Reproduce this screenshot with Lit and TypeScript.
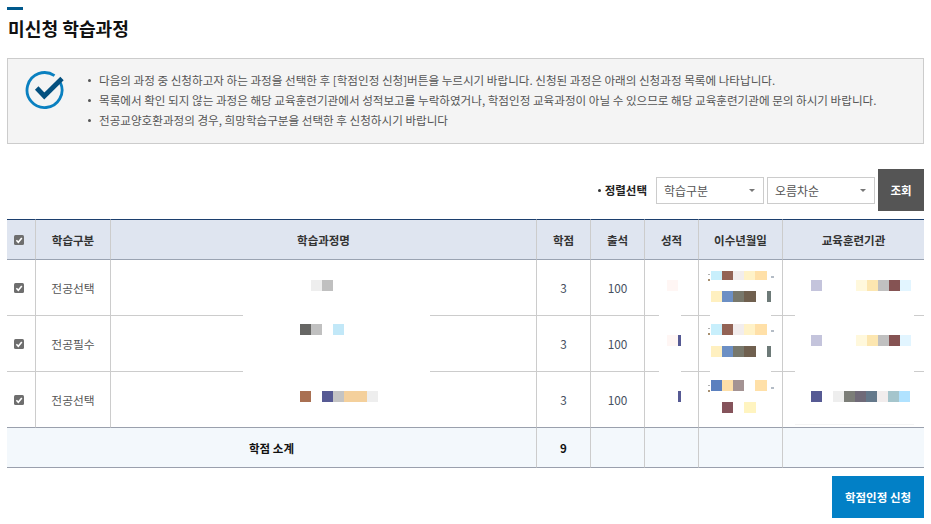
import { LitElement, html, css, svg } from "lit";
import { customElement } from "lit/decorators.js";

type Tile = [number, number, number, number, string];

const OX = 7;
const OY = 219;

const row = (y: number, items: [number, number, string][], h = 11): Tile[] =>
  items.map(([x1, x2, c]) => [x1, y, x2 - x1, h, c] as Tile);

const date1 = (y1: number, h1: number, y2: number): Tile[] => [
  ...row(y1, [[711, 722, "#c8effc"], [722, 733, "#936355"], [733, 744, "#f2eded"], [744, 755, "#fff2c8"], [755, 767, "#ffe0a8"]], h1),
  ...row(y2, [[711, 722, "#fff0c0"], [722, 733, "#6c8fc4"], [733, 744, "#78786c"], [744, 756, "#70604f"], [767, 771, "#6d7a78"]]),
];
const inst1 = (y: number): Tile[] =>
  row(y, [[811, 822, "#c4c4dc"], [856, 867, "#fff8dc"], [867, 878, "#fce6b0"], [878, 889, "#c0c0c0"], [889, 900, "#855353"], [900, 911, "#e2f5ff"]]);

const specks = (y: number): Tile[] => [
  [708, y, 2, 1, "#b0b0b0"],
  [708, y + 5, 2, 2, "#a89070"],
  [771, y + 2, 3, 2, "#b4bcc6"],
];

const WHITE = "#ffffff";
const TILES: Tile[] = [
  // white masks over the row rules
  [243, 315, 187, 1, WHITE], [243, 371, 187, 1, WHITE],
  [659, 315, 22, 1, WHITE], [659, 371, 22, 1, WHITE],
  [710, 315, 61, 1, WHITE], [710, 371, 61, 1, WHITE],
  [795, 315, 119, 1, WHITE], [795, 371, 119, 1, WHITE],
  [795, 424, 119, 1, "#f4f4f4"],
  // course names
  ...row(280, [[311, 322, "#eeeeee"], [322, 333, "#c0c0c0"]]),
  ...row(324, [[300, 311, "#666664"], [311, 322, "#c0c0c0"], [333, 344, "#c2e8f8"]]),
  ...row(391, [[300, 311, "#a97052"], [322, 333, "#565a94"], [333, 344, "#c4c4c4"], [344, 367, "#f4d09c"], [367, 378, "#eeeeee"]]),
  // grades
  ...row(280, [[667, 678, "#fff6f4"]]),
  ...row(335, [[667, 678, "#fff6f4"], [678, 681, "#565a94"]]),
  ...row(391, [[678, 681, "#565a94"]]),
  // dates
  ...date1(271, 9, 291),
  ...date1(324, 11, 346),
  ...row(380, [[711, 722, "#5b80bf"], [722, 733, "#fddfa8"], [733, 744, "#a49393"], [755, 767, "#ffe0a8"]]),
  ...row(402, [[722, 733, "#85535b"], [744, 756, "#fff4c0"]]),
  ...specks(274), ...specks(328), ...specks(385),
  // institutions
  ...inst1(280),
  ...inst1(335),
  ...row(391, [[811, 822, "#565a94"], [833, 844, "#eeeeee"], [844, 855, "#7c7e78"], [855, 866, "#706a78"], [866, 877, "#64788a"], [877, 888, "#f2eded"], [888, 899, "#a5c5cc"], [899, 910, "#b0e2ff"]]),
];

const check = svg`<path d="M2.4 5.2 L4.3 7.2 L7.8 2.9" fill="none" stroke="#fff" stroke-width="1.6"/>`;

@customElement("app-root")
export class AppRoot extends LitElement {
  static styles = css`
    :host {
      display: block;
      width: 931px;
      height: 524px;
      box-sizing: border-box;
      padding: 7px 7px 0;
      overflow: hidden;
      background: #fff;
      font-family: "Noto Sans CJK KR", "Noto Sans", sans-serif;
      font-size: 12px;
      color: #555;
    }
    .accent { width: 16px; height: 3px; background: #00598c; }
    h1 {
      margin: 0;
      padding: 6px 0 0 1px;
      font-size: 18.15px;
      line-height: 24px;
      font-weight: 700;
      color: #111;
      height: 24px;
    }
    .notice {
      box-sizing: border-box;
      margin-top: 18px;
      height: 86px;
      border: 1px solid #ccc;
      background: #f4f4f4;
      display: flex;
      align-items: flex-start;
      padding: 11px 0 0 17px;
    }
    .notice svg { width: 40px; height: 40px; flex: none; }
    .notice ul { list-style: none; margin: 0; padding: 0 0 0 23px; }
    .notice li {
      height: 20px;
      line-height: 20px;
      padding-left: 11px;
      position: relative;
      white-space: nowrap;
      color: #555;
      font-size: 11.58px;
    }
    .notice li::before {
      content: "";
      position: absolute;
      left: 0;
      top: 9px;
      width: 3px;
      height: 3px;
      border-radius: 50%;
      background: #555;
    }
    .filters {
      display: flex;
      justify-content: flex-end;
      align-items: center;
      margin-top: 25px;
      height: 42px;
    }
    .sort-label {
      color: #222;
      font-weight: 700;
      font-size: 11.5px;
      margin-right: 9px;
      display: flex;
      align-items: center;
      gap: 4px;
    }
    .sort-label::before {
      content: "";
      width: 3px;
      height: 3px;
      border-radius: 50%;
      background: #333;
    }
    .select {
      box-sizing: border-box;
      width: 108px;
      height: 27px;
      border: 1px solid #ccc;
      margin-right: 3px;
      display: flex;
      align-items: center;
      justify-content: space-between;
      padding: 0 8px 0 7px;
      color: #555;
      background: #fff;
    }
    .select i {
      width: 0;
      height: 0;
      border-left: 3px solid transparent;
      border-right: 3px solid transparent;
      border-top: 3px solid #777;
    }
    .search {
      width: 46px;
      height: 42px;
      background: #555;
      color: #fff;
      font-weight: 700;
      font-size: 11.5px;
      display: flex;
      align-items: center;
      justify-content: center;
    }
    .table-wrap { position: relative; margin-top: 8px; }
    table {
      border-collapse: separate;
      border-spacing: 0;
      table-layout: fixed;
      width: 917px;
    }
    th, td {
      box-sizing: border-box;
      padding: 0;
      text-align: center;
      border-right: 1px solid #ccc;
      border-bottom: 1px solid #ccc;
    }
    th:last-child, td:last-child { border-right: 0; }
    th {
      height: 41px;
      background: #dfe5f0;
      border-top: 1px solid #1c3f6e;
      border-bottom: 1px solid #9aa3b2;
      color: #333;
      font-weight: 700;
      font-size: 11.5px;
    }
    td { height: 56px; color: #555; font-size: 11.8px; }
    td.num { color: #465060; padding-bottom: 1px; }
    tbody tr:last-child td { border-bottom-color: #9aa0ad; }
    tfoot td {
      height: 40px;
      background: #f3f8fc;
      border-bottom: 1px solid #9aa0ad;
      color: #111;
      font-weight: 700;
      font-size: 11.5px;
    }
    .cb { display: block; width: 10px; height: 10px; margin: 0 auto 0 7px; }
    .tiles { position: absolute; left: 0; top: 0; width: 0; height: 0; }
    .tiles span { position: absolute; display: block; }
    .actions { display: flex; justify-content: flex-end; margin-top: 8px; }
    .apply {
      width: 92px;
      height: 42px;
      background: #0280c6;
      color: #fff;
      font-weight: 700;
      font-size: 11.5px;
      display: flex;
      align-items: center;
      justify-content: center;
    }
  `;

  private cb() {
    return html`<svg class="cb" viewBox="0 0 10 10"><rect width="10" height="10" rx="1.5" fill="#6e6e6e"/>${check}</svg>`;
  }

  render() {
    const rows = ["전공선택", "전공필수", "전공선택"];
    return html`
      <div class="accent"></div>
      <h1>미신청 학습과정</h1>
      <div class="notice">
        <svg viewBox="0 0 40 40">
          <path d="M29.5 5.7 A17.5 17.5 0 1 0 35.36 12.6" fill="none" stroke="#0a80c0" stroke-width="2.8"/>
          <path d="M11.7 18 L19.3 26 L37 8.5" fill="none" stroke="#04507f" stroke-width="4.8"/>
        </svg>
        <ul>
          <li>다음의 과정 중 신청하고자 하는 과정을 선택한 후 [학점인정 신청]버튼을 누르시기 바랍니다. 신청된 과정은 아래의 신청과정 목록에 나타납니다.</li>
          <li>목록에서 확인 되지 않는 과정은 해당 교육훈련기관에서 성적보고를 누락하였거나, 학점인정 교육과정이 아닐 수 있으므로 해당 교육훈련기관에 문의 하시기 바랍니다.</li>
          <li>전공교양호환과정의 경우, 희망학습구분을 선택한 후 신청하시기 바랍니다</li>
        </ul>
      </div>
      <div class="filters">
        <span class="sort-label">정렬선택</span>
        <div class="select"><span>학습구분</span><i></i></div>
        <div class="select"><span>오름차순</span><i></i></div>
        <div class="search">조회</div>
      </div>
      <div class="table-wrap">
        <table>
          <colgroup>
            <col style="width:29px" /><col style="width:75px" /><col style="width:426px" />
            <col style="width:54px" /><col style="width:54px" /><col style="width:54px" />
            <col style="width:84px" /><col />
          </colgroup>
          <thead>
            <tr>
              <th>${this.cb()}</th><th>학습구분</th><th>학습과정명</th><th>학점</th>
              <th>출석</th><th>성적</th><th>이수년월일</th><th>교육훈련기관</th>
            </tr>
          </thead>
          <tbody>
            ${rows.map(
              (r) => html`<tr>
                <td>${this.cb()}</td><td>${r}</td><td></td>
                <td class="num">3</td><td class="num">100</td><td></td><td></td><td></td>
              </tr>`
            )}
          </tbody>
          <tfoot>
            <tr>
              <td colspan="3">학점 소계</td><td>9</td><td></td><td></td><td></td><td></td>
            </tr>
          </tfoot>
        </table>
        <div class="tiles">
          ${TILES.map(
            ([x, y, w, h, c]) =>
              html`<span style="left:${x - OX}px;top:${y - OY}px;width:${w}px;height:${h}px;background:${c}"></span>`
          )}
        </div>
      </div>
      <div class="actions"><div class="apply">학점인정 신청</div></div>
    `;
  }
}
